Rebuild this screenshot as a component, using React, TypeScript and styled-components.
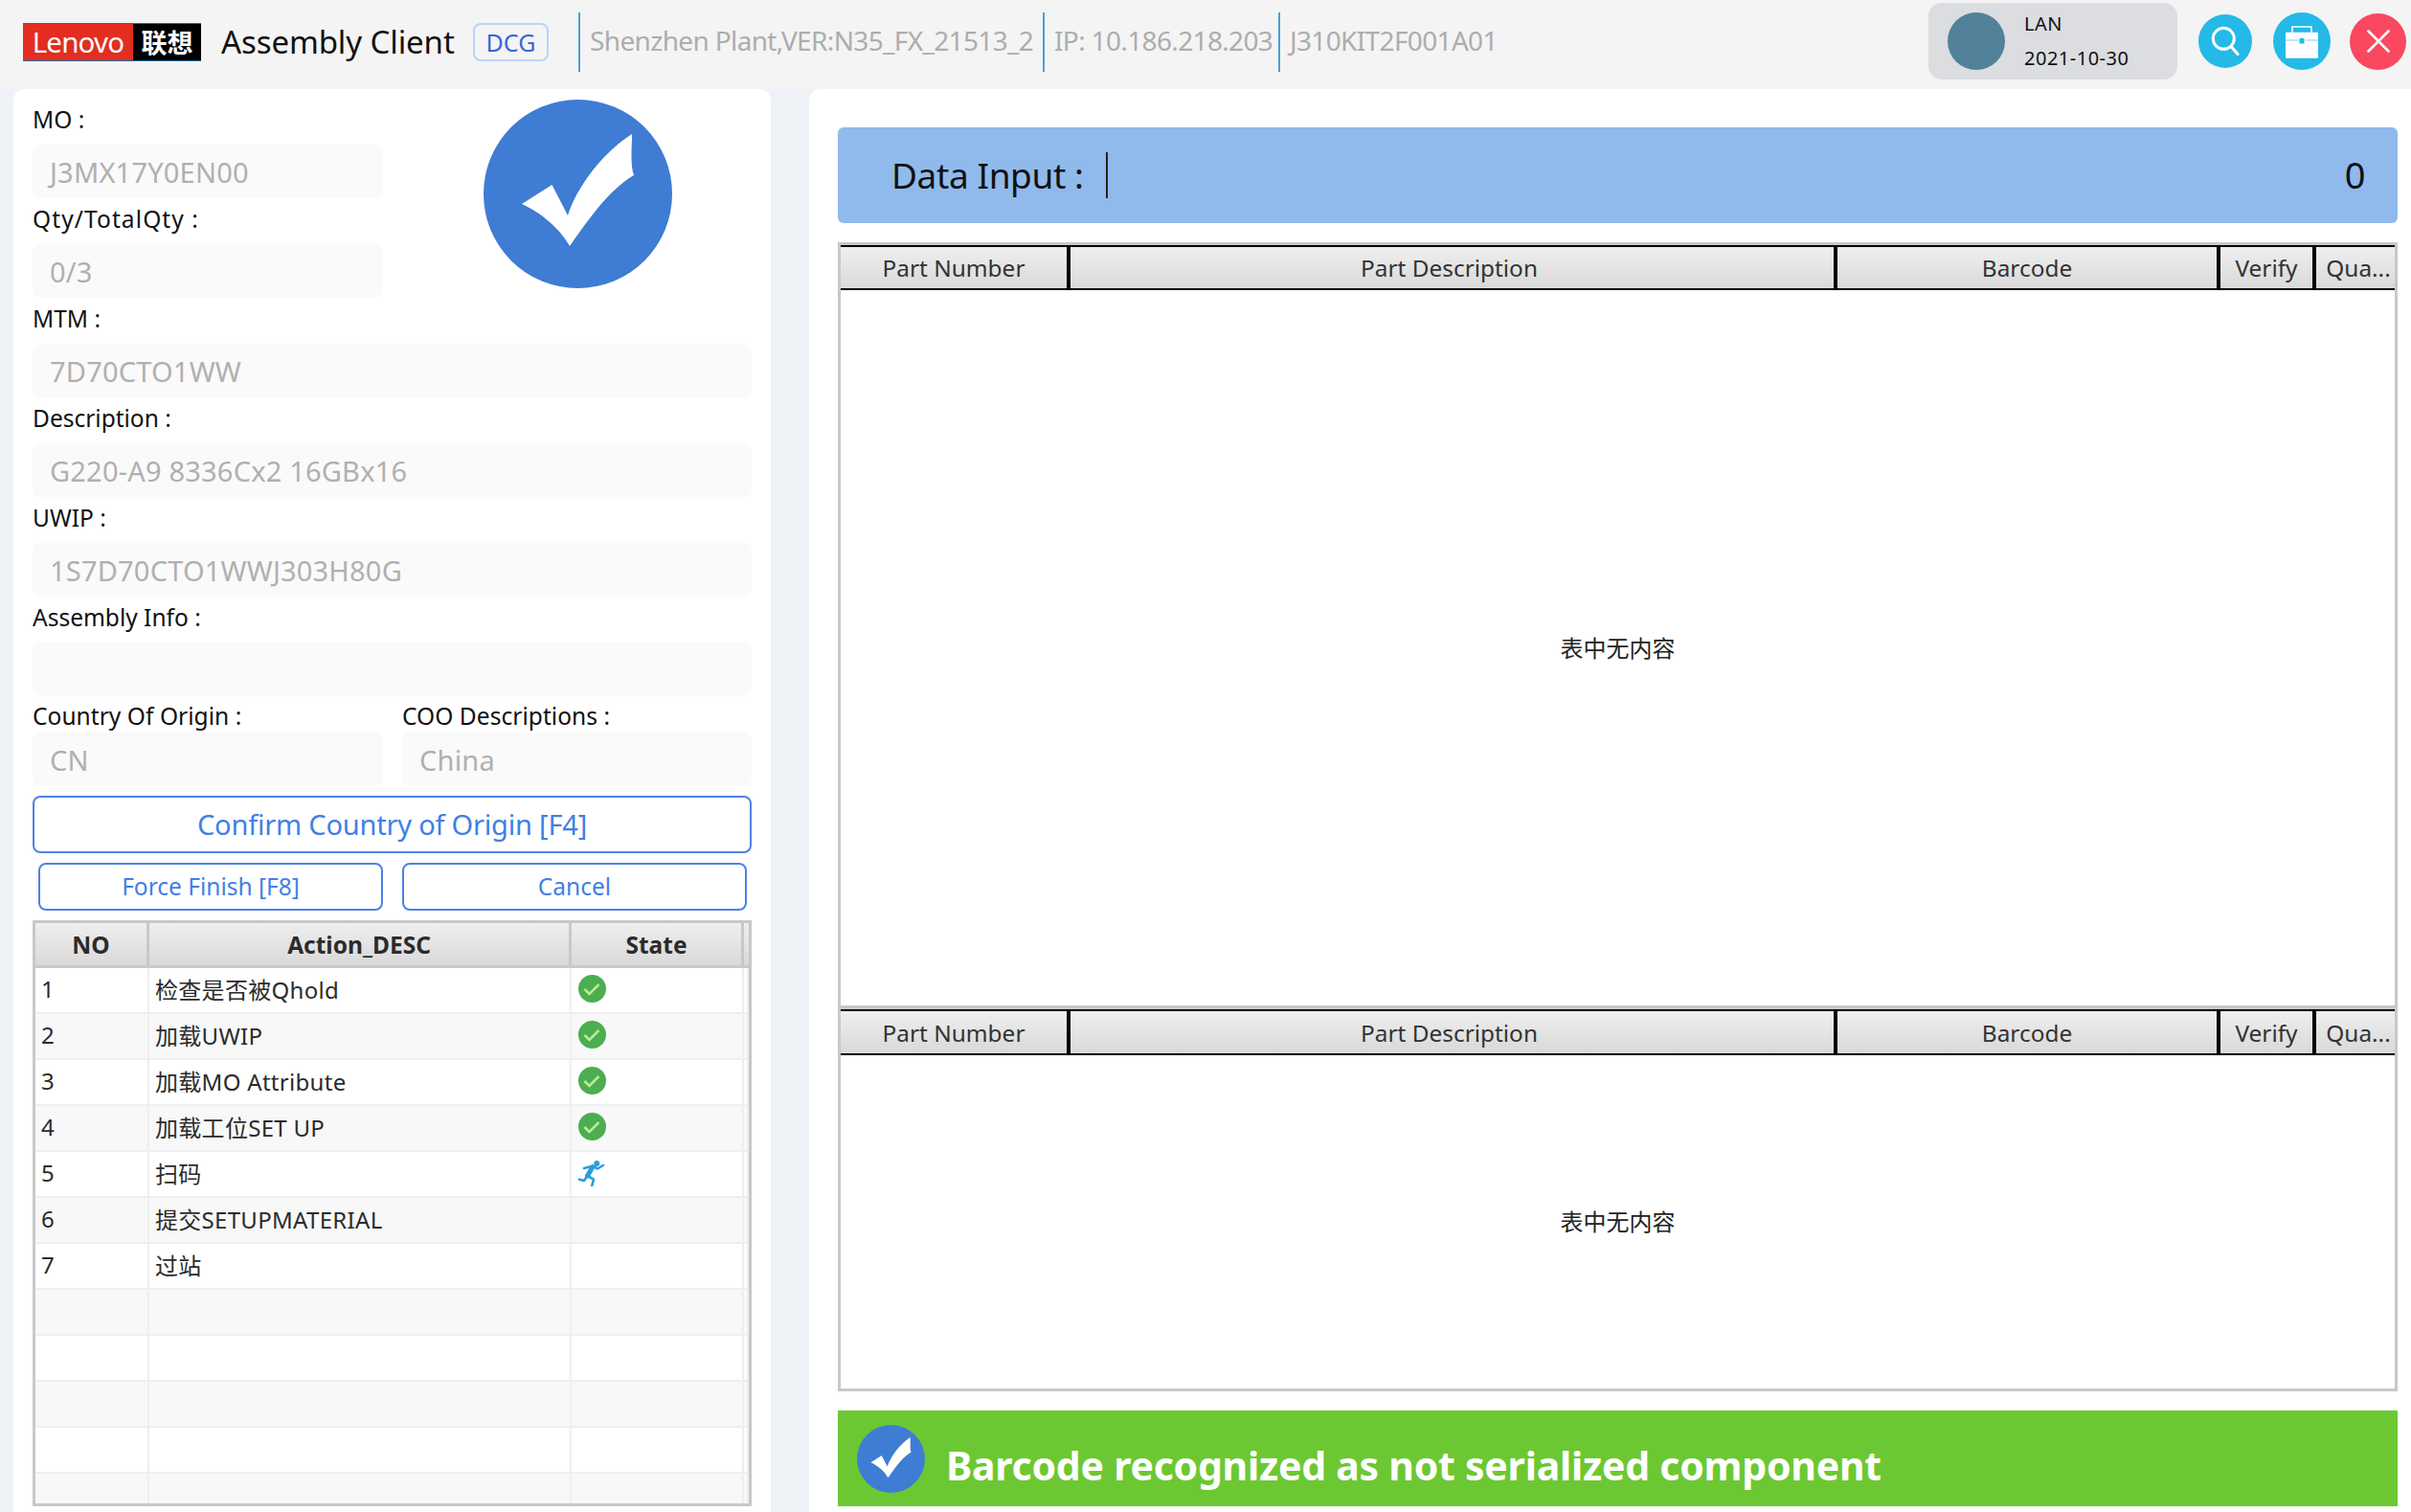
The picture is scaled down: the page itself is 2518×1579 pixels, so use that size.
import React from 'react';
import styled, { createGlobalStyle } from 'styled-components';

const FONT = '"Noto Sans", "Noto Sans CJK SC", sans-serif';

const GlobalStyle = createGlobalStyle`
  html, body {
    margin: 0;
    padding: 0;
    background: #eff3f7;
    overflow: hidden;
  }
  * {
    box-sizing: border-box;
  }
`;

const Page = styled('div')`
  width: 2518px;
  height: 1579px;
  display: flex;
  flex-direction: column;
  font-family: ${FONT};
  overflow: hidden;
`;

const TopBar = styled('header')`
  height: 93px;
  flex: none;
  display: flex;
  align-items: center;
  background: #f4f4f4;
  padding-left: 24px;
`;

const Logo = styled('div')`
  width: 186px;
  height: 40px;
  display: flex;
  border-top: 1px solid #1d6fa8;
  border-bottom: 1px solid #1d6fa8;
  margin-top: -6px;
  flex: none;
`;

const LogoPart = styled('span')<{ $bg: string; $w: number; $size: number; $weight: number; $track: number }>`
  width: ${({ $w }) => $w}px;
  background: ${({ $bg }) => $bg};
  color: #fff;
  display: flex;
  align-items: center;
  justify-content: center;
  font-size: ${({ $size }) => $size}px;
  font-weight: ${({ $weight }) => $weight};
  letter-spacing: ${({ $track }) => $track}px;
`;

const AppTitle = styled('div')`
  margin-left: 21px;
  margin-top: -7px;
  font-size: 33px;
  letter-spacing: -0.1px;
  color: #111;
  white-space: nowrap;
  width: 263px;
`;

const Badge = styled('div')`
  width: 79px;
  height: 40px;
  margin-top: -6px;
  border: 2px solid #b8d3fb;
  border-radius: 8px;
  color: #3c66d4;
  font-size: 25px;
  display: flex;
  align-items: center;
  justify-content: center;
`;

const InfoList = styled('div')`
  display: flex;
  margin-left: 31px;
  margin-top: -6px;
`;

const InfoItem = styled('div')<{ $w: number }>`
  width: ${({ $w }) => $w}px;
  height: 62px;
  border-left: 2px solid #4a9fd6;
  padding: 0 0 3px 10px;
  display: flex;
  align-items: center;
  color: #adadad;
  font-size: 28px;
  letter-spacing: -0.65px;
  white-space: nowrap;
`;

const TopRight = styled('div')`
  margin-left: auto;
  display: flex;
  align-items: center;
  margin-top: -7px;
  padding-right: 5px;
`;

const Status = styled('div')`
  width: 260px;
  height: 80px;
  background: #dcdde0;
  border-radius: 14px;
  display: flex;
  align-items: center;
  padding-left: 20px;
  gap: 20px;
  margin-right: 22px;
`;

const Avatar = styled('div')`
  width: 60px;
  height: 60px;
  border-radius: 50%;
  background: #52819a;
`;

const StatusText = styled('div')`
  font-size: 20px;
  line-height: 36px;
  letter-spacing: 0.5px;
  color: #111;
`;

const RoundButton = styled('div')<{ $bg: string; $size: number; $gap: number }>`
  width: ${({ $size }) => $size}px;
  height: ${({ $size }) => $size}px;
  margin-right: ${({ $gap }) => $gap}px;
  border-radius: 50%;
  background: ${({ $bg }) => $bg};
  display: flex;
  align-items: center;
  justify-content: center;
`;

const Main = styled('main')`
  flex: 1;
  display: flex;
  padding-left: 14px;
  min-height: 0;
`;

const LeftPanel = styled('section')`
  width: 791px;
  flex: none;
  background: #fff;
  border-radius: 12px 12px 0 0;
  padding: 10px 20px 0;
  position: relative;
  overflow: hidden;
`;

const RightPanel = styled('section')`
  flex: 1;
  margin-left: 40px;
  background: #fff;
  border-radius: 12px 0 0 0;
  padding: 40px 14px 0 30px;
  display: flex;
  flex-direction: column;
  min-width: 0;
`;

const Label = styled('label')<{ $track?: number }>`
  display: flex;
  align-items: center;
  height: 48px;
  padding-bottom: 6px;
  font-size: 24.5px;
  letter-spacing: ${({ $track }) => $track || 0}px;
  color: #111;
  white-space: nowrap;
`;

const ShortLabel = styled(Label)`
  height: 38px;
  padding: 2px 0 0;
  letter-spacing: 0.05px;
`;

const Input = styled('div')<{ $narrow?: boolean }>`
  width: ${({ $narrow }) => ($narrow ? '366px' : '100%')};
  height: 56px;
  background: #fafafa;
  border-radius: 8px;
  padding-left: 18px;
  display: flex;
  align-items: center;
  font-size: 29px;
  letter-spacing: 0.2px;
  color: #b0b0b0;
  white-space: nowrap;
`;

const TwoCols = styled('div')`
  display: grid;
  grid-template-columns: 366px 365px;
  column-gap: 20px;
`;

const BigCheckHolder = styled('div')`
  position: absolute;
  left: 491px;
  top: 11px;
`;

const OutlineButton = styled('div')<{ $size: number; $h: number; $track: number }>`
  height: ${({ $h }) => $h}px;
  border: 2px solid #4c82e6;
  border-radius: 8px;
  padding-bottom: 2px;
  color: #3f7fe6;
  font-size: ${({ $size }) => $size}px;
  letter-spacing: ${({ $track }) => $track}px;
  display: flex;
  align-items: center;
  justify-content: center;
  white-space: nowrap;
`;

const ConfirmRow = styled('div')`
  margin-top: 10px;
`;

const ActionRow = styled('div')`
  margin-top: 10px;
  padding: 0 5px 0 6px;
  display: grid;
  grid-template-columns: 360px 360px;
  column-gap: 20px;
`;

const ActionTable = styled('div')`
  margin-top: 10px;
  width: 751px;
  height: 612px;
  border: 3px solid #c8c8c8;
  overflow: hidden;
`;

const ActionHead = styled('div')`
  display: grid;
  grid-template-columns: 119px 441px 180px 1fr;
  height: 47px;
  border-bottom: 3px solid #c8c8c8;
`;

const ActionHeadCell = styled('div')`
  background: linear-gradient(#efefef, #d9d9d9);
  border-right: 3px solid #c8c8c8;
  display: flex;
  align-items: center;
  justify-content: center;
  font-size: 24.5px;
  font-weight: 700;
  color: #2b2b2b;
  &:last-child {
    border-right: 0;
  }
`;

const ActionRowLine = styled('div')<{ $alt: boolean }>`
  display: grid;
  grid-template-columns: 119px 441px 180px 1fr;
  height: 48px;
  background: ${({ $alt }) => ($alt ? '#f8f8f8' : '#fff')};
  border-bottom: 2px solid #efefef;
`;

const ActionCell = styled('div')<{ $pad: number }>`
  border-right: 2px solid #efefef;
  padding: 0 0 3px ${({ $pad }) => $pad}px;
  display: flex;
  align-items: center;
  font-size: 24px;
  letter-spacing: 0.3px;
  color: #2b2b2b;
  white-space: nowrap;
`;

const InputBar = styled('div')`
  height: 100px;
  flex: none;
  background: #90baec;
  border-radius: 6px;
  display: flex;
  align-items: center;
  padding: 0 34px 2px 56px;
  font-size: 37px;
  letter-spacing: -0.4px;
  color: #111;
`;

const Caret = styled('span')`
  width: 2px;
  height: 48px;
  background: #222;
  margin: 2px 0 0 23px;
`;

const Count = styled('span')`
  margin-left: auto;
  font-size: 38px;
`;

const GridsBox = styled('div')`
  margin-top: 20px;
  height: 1200px;
  flex: none;
  border: 3px solid #c8c8c8;
  display: flex;
  flex-direction: column;
`;

const GridPart = styled('div')<{ $h: number; $divider?: boolean }>`
  height: ${({ $h }) => $h}px;
  flex: none;
  display: flex;
  flex-direction: column;
  border-bottom: ${({ $divider }) => ($divider ? '4px solid #c8c8c8' : '0')};
`;

const GridHead = styled('div')<{ $h: number }>`
  height: ${({ $h }) => $h}px;
  flex: none;
  display: grid;
  grid-template-columns: 240px 801px 400px 100px 1fr;
  border-top: 2px solid #000;
  border-bottom: 2px solid #000;
`;

const GridHeadCell = styled('div')`
  background: linear-gradient(#efefef, #d9d9d9);
  border-right: 4px solid #000;
  display: flex;
  align-items: center;
  justify-content: center;
  font-size: 24.4px;
  color: #333;
  white-space: nowrap;
  overflow: hidden;
  &:nth-child(2) {
    padding-right: 6px;
  }
  &:last-child {
    border-right: 0;
    padding-left: 6px;
  }
`;

const EmptyText = styled('div')`
  flex: 1;
  display: flex;
  align-items: center;
  justify-content: center;
  padding-bottom: 2px;
  font-size: 24px;
  color: #222;
`;

const MessageBar = styled('div')`
  margin-top: 20px;
  height: 100px;
  flex: none;
  background: #6cc832;
  display: flex;
  align-items: center;
  padding-left: 20px;
  gap: 22px;
  color: #fff;
  font-size: 41px;
  font-weight: 700;
  letter-spacing: -0.25px;
  white-space: nowrap;
`;

const MessageText = styled('span')`
  margin-top: 14px;
`;

const CheckBadge = ({ size }: { size: number }) => (
  <svg width={size} height={size} viewBox="0 0 197 197">
    <circle cx="98.5" cy="98.5" r="98.5" fill="#3f7cd4" />
    <path
      d="M155 36 C155 50 153 68 157 79 C130 95 110 125 90 153 C80 135 60 118 40 109 L71.5 89 L88 121 C98 90 125 55 155 36 Z"
      fill="#fff"
    />
  </svg>
);

const OkIcon = () => (
  <svg width="29" height="29" viewBox="0 0 29 29">
    <circle cx="14.5" cy="14.5" r="14.5" fill="#4cae50" />
    <path d="M6.5 15 L11.5 20 L21.5 10" fill="none" stroke="#bdeb94" strokeWidth="2.5" />
  </svg>
);

const RunIcon = () => (
  <svg width="28" height="28" viewBox="0 0 28 28">
    <circle cx="19.3" cy="4" r="3" fill="#2b9ddd" />
    <path d="M15 7.5 L9.5 17" fill="none" stroke="#2b9ddd" strokeWidth="5" strokeLinecap="round" />
    <path
      d="M6 9 L15 6.7 L20 9.5 L26 6 M9.5 17 L6 22 L1 20.7 M9.5 17 L16 20.7 L14.3 27"
      fill="none"
      stroke="#2b9ddd"
      strokeWidth="2.6"
      strokeLinecap="round"
      strokeLinejoin="round"
    />
  </svg>
);

const SearchIcon = () => (
  <svg width="34" height="36" viewBox="0 0 34 36">
    <circle cx="15.3" cy="15.3" r="11" fill="none" stroke="#fff" strokeWidth="3" />
    <path d="M23.5 24 L30 31.5" stroke="#fff" strokeWidth="3.2" strokeLinecap="round" />
  </svg>
);

const BagIcon = () => (
  <svg width="36" height="36" viewBox="0 0 36 36">
    <path d="M8 9 V3 H28 V9" fill="none" stroke="#fff" strokeWidth="1.6" />
    <rect x="1" y="8.7" width="34" height="27" rx="1" fill="#fff" />
    <path d="M1 17 H35" stroke="#7fd3f0" strokeWidth="1.2" />
    <rect x="15" y="14.5" width="6" height="6.5" rx="1" fill="#25b9e8" stroke="#fff" strokeWidth="1" />
  </svg>
);

const CloseIcon = () => (
  <svg width="24" height="24" viewBox="0 0 24 24">
    <path d="M1.5 1.5 L22.5 22.5 M22.5 1.5 L1.5 22.5" stroke="#fff" strokeWidth="2.6" strokeLinecap="round" />
  </svg>
);

const fields = [
  { label: 'MO :', value: 'J3MX17Y0EN00', narrow: true },
  { label: 'Qty/TotalQty :', value: '0/3', narrow: true, track: 1.1 },
  { label: 'MTM :', value: '7D70CTO1WW' },
  { label: 'Description :', value: 'G220-A9 8336Cx2 16GBx16' },
  { label: 'UWIP :', value: '1S7D70CTO1WWJ303H80G' },
  { label: 'Assembly Info :', value: '' },
];

const actions = [
  { no: '1', desc: '检查是否被Qhold', state: 'ok' },
  { no: '2', desc: '加载UWIP', state: 'ok' },
  { no: '3', desc: '加载MO Attribute', state: 'ok' },
  { no: '4', desc: '加载工位SET UP', state: 'ok' },
  { no: '5', desc: '扫码', state: 'run' },
  { no: '6', desc: '提交SETUPMATERIAL', state: '' },
  { no: '7', desc: '过站', state: '' },
  { no: '', desc: '', state: '' },
  { no: '', desc: '', state: '' },
  { no: '', desc: '', state: '' },
  { no: '', desc: '', state: '' },
  { no: '', desc: '', state: '' },
];

const gridColumns = ['Part Number', 'Part Description', 'Barcode', 'Verify', 'Qua...'];

const PartGrid = ({ height, headHeight, divider }: { height: number; headHeight: number; divider?: boolean }) => (
  <GridPart $h={height} $divider={divider}>
    <GridHead $h={headHeight}>
      {gridColumns.map((name) => (
        <GridHeadCell key={name}>{name}</GridHeadCell>
      ))}
    </GridHead>
    <EmptyText>表中无内容</EmptyText>
  </GridPart>
);

export default function App() {
  return (
    <Page>
      <GlobalStyle />
      <TopBar>
        <Logo>
          <LogoPart $bg="#e22d20" $w={115} $size={29.5} $weight={400} $track={-0.8}>
            Lenovo
          </LogoPart>
          <LogoPart $bg="#000" $w={71} $size={27} $weight={700} $track={0}>
            联想
          </LogoPart>
        </Logo>
        <AppTitle>Assembly Client</AppTitle>
        <Badge>DCG</Badge>
        <InfoList>
          <InfoItem $w={485}>Shenzhen Plant,VER:N35_FX_21513_2</InfoItem>
          <InfoItem $w={246}>IP: 10.186.218.203</InfoItem>
          <InfoItem $w={240}>J310KIT2F001A01</InfoItem>
        </InfoList>
        <TopRight>
          <Status>
            <Avatar />
            <StatusText>
              LAN
              <br />
              2021-10-30
            </StatusText>
          </Status>
          <RoundButton $bg="#25b9e8" $size={56} $gap={22}>
            <SearchIcon />
          </RoundButton>
          <RoundButton $bg="#25b9e8" $size={60} $gap={20}>
            <BagIcon />
          </RoundButton>
          <RoundButton $bg="#f9485f" $size={59} $gap={0}>
            <CloseIcon />
          </RoundButton>
        </TopRight>
      </TopBar>
      <Main>
        <LeftPanel>
          <BigCheckHolder>
            <CheckBadge size={197} />
          </BigCheckHolder>
          {fields.map((field) => (
            <div key={field.label}>
              <Label $track={field.track}>{field.label}</Label>
              <Input $narrow={field.narrow}>{field.value}</Input>
            </div>
          ))}
          <TwoCols>
            <div>
              <ShortLabel>Country Of Origin :</ShortLabel>
              <Input>CN</Input>
            </div>
            <div>
              <ShortLabel>COO Descriptions :</ShortLabel>
              <Input>China</Input>
            </div>
          </TwoCols>
          <ConfirmRow>
            <OutlineButton $size={29} $h={60} $track={-0.2}>
              Confirm Country of Origin [F4]
            </OutlineButton>
          </ConfirmRow>
          <ActionRow>
            <OutlineButton $size={24.5} $h={50} $track={0}>
              Force Finish [F8]
            </OutlineButton>
            <OutlineButton $size={24.5} $h={50} $track={0}>
              Cancel
            </OutlineButton>
          </ActionRow>
          <ActionTable>
            <ActionHead>
              <ActionHeadCell>NO</ActionHeadCell>
              <ActionHeadCell>Action_DESC</ActionHeadCell>
              <ActionHeadCell>State</ActionHeadCell>
              <ActionHeadCell />
            </ActionHead>
            {actions.map((row, i) => (
              <ActionRowLine key={i} $alt={i % 2 === 1}>
                <ActionCell $pad={6}>{row.no}</ActionCell>
                <ActionCell $pad={6}>{row.desc}</ActionCell>
                <ActionCell $pad={7}>
                  {row.state === 'ok' && <OkIcon />}
                  {row.state === 'run' && <RunIcon />}
                </ActionCell>
                <ActionCell $pad={0} />
              </ActionRowLine>
            ))}
          </ActionTable>
        </LeftPanel>
        <RightPanel>
          <InputBar>
            Data Input :
            <Caret />
            <Count>0</Count>
          </InputBar>
          <GridsBox>
            <PartGrid height={798} headHeight={47} divider />
            <PartGrid height={395} headHeight={48} />
          </GridsBox>
          <MessageBar>
            <CheckBadge size={71} />
            <MessageText>Barcode recognized as not serialized component</MessageText>
          </MessageBar>
        </RightPanel>
      </Main>
    </Page>
  );
}
